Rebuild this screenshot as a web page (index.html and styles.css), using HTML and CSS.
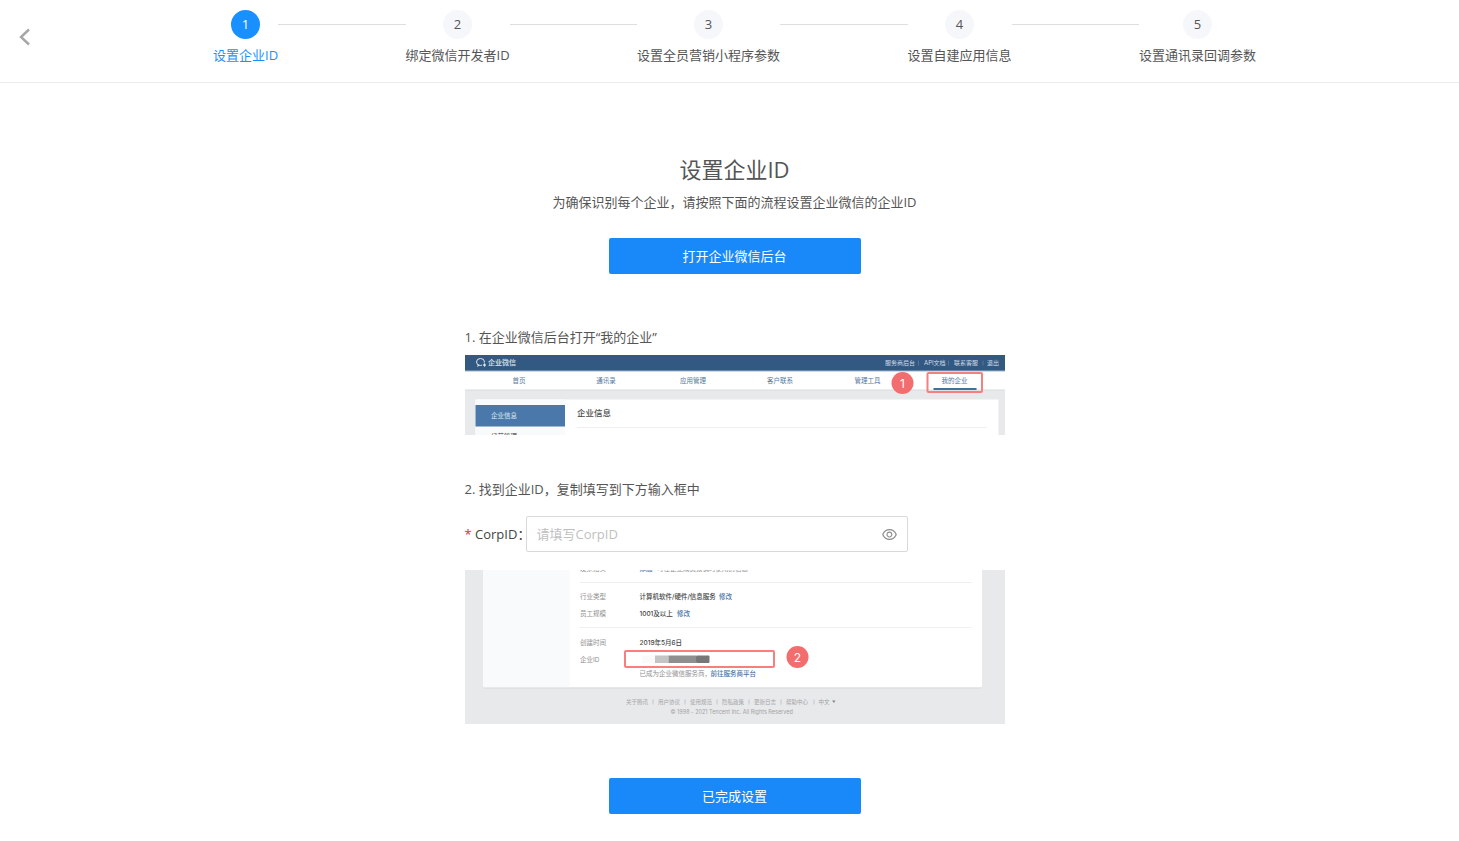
FILE: index.html
```html
<!DOCTYPE html>
<html lang="zh-CN">
<head>
	<meta charset="UTF-8">
	<meta name="viewport" content="width=device-width, initial-scale=1.0">
	<title>设置企业ID</title>
	<link rel="stylesheet" href="styles.css">
</head>
<body>
	<header class="header">
		<button class="back" type="button" aria-label="返回">
			<svg width="12" height="18" viewBox="0 0 12 18"><path d="M10 1.5L2 9l8 7.5" fill="none" stroke="#a6a6a6" stroke-width="2.4"/></svg>
		</button>
		<ol class="steps">
			<li class="step active"><span class="num">1</span><span class="name">设置企业ID</span></li>
			<li class="line"></li>
			<li class="step"><span class="num">2</span><span class="name">绑定微信开发者ID</span></li>
			<li class="line"></li>
			<li class="step"><span class="num">3</span><span class="name">设置全员营销小程序参数</span></li>
			<li class="line"></li>
			<li class="step"><span class="num">4</span><span class="name">设置自建应用信息</span></li>
			<li class="line"></li>
			<li class="step"><span class="num">5</span><span class="name">设置通讯录回调参数</span></li>
		</ol>
	</header>

	<main class="main">
		<h1>设置企业ID</h1>
		<p class="desc">为确保识别每个企业，请按照下面的流程设置企业微信的企业ID</p>
		<button class="btn" type="button">打开企业微信后台</button>

		<form class="guide" id="guide">
			<p class="tip">1. 在企业微信后台打开“我的企业”</p>
			<svg class="shot" viewBox="0 0 1080 160">
				<rect width="1080" height="160" fill="#e8e9eb"/>
				<!-- top bar -->
				<rect width="1080" height="32" fill="#325982"/>
				<ellipse cx="31" cy="14" rx="8" ry="7" fill="none" stroke="#dfe8f1" stroke-width="2"/>
				<path d="M26 19l-2 5 5-3" fill="#dfe8f1"/>
				<circle cx="39" cy="20" r="5" fill="#325982"/>
				<path d="M39 16l3 4-3 4-3-4z" fill="#dfe8f1"/>
				<text class="t14 medium" x="46" y="20" fill="#dfe8f1">企业微信</text>
				<g class="t12" fill="#d3deea">
					<text x="840" y="20">服务商后台</text>
					<text x="918" y="20">API文档</text>
					<text x="978" y="20">联系客服</text>
					<text x="1044" y="20">退出</text>
				</g>
				<path d="M907 11v10M967 11v10M1036 11v10" stroke="#7892ae"/>
				<!-- nav -->
				<rect y="32" width="1080" height="38" fill="#fff"/>
				<path d="M0 32h1080" stroke="#9fb6cd" stroke-width="2"/>
				<path d="M0 70h1080" stroke="#d9dbde" stroke-width="2"/>
				<g class="t13 mid" fill="#55789f">
					<text x="108" y="55">首页</text>
					<text x="282" y="55">通讯录</text>
					<text x="456" y="55">应用管理</text>
					<text x="630" y="55">客户联系</text>
					<text x="805" y="55">管理工具</text>
					<text x="979" y="55">我的企业</text>
				</g>
				<rect x="937" y="66" width="86" height="4" fill="#456f9b"/>
				<rect x="925" y="36" width="109" height="38" rx="2" fill="none" stroke="#f87f7f" stroke-width="4"/>
				<circle cx="875" cy="56" r="22" fill="#f26d6d"/>
				<text class="t24 mid" x="875" y="65" fill="#fff">1</text>
				<!-- panel -->
				<rect x="21" y="89" width="1046" height="71" fill="#fff"/>
				<rect x="21" y="89" width="179" height="71" fill="#f9fafb"/>
				<rect x="21" y="100" width="179" height="43" fill="#4a78ab"/>
				<text class="t13" x="52" y="126" fill="#dfe8f1">企业信息</text>
				<text class="t13" x="52" y="168" fill="#444">经营管理</text>
				<text class="t17 medium" x="224" y="122" fill="#4a4a4a">企业信息</text>
				<path d="M224 145h820" stroke="#efefef" stroke-width="2"/>
			</svg>

			<p class="tip">2. 找到企业ID，复制填写到下方输入框中</p>
			<div class="field">
				<label for="corp-id"><span class="star">*</span> CorpID：</label>
				<div class="input-box">
					<input id="corp-id" type="text" placeholder="请填写CorpID">
					<button class="eye" type="button" aria-label="显示">
						<svg width="15" height="15" viewBox="64 64 896 896" fill="#8c8c8c"><path d="M942.2 486.2C847.4 286.5 704.1 186 512 186c-192.2 0-335.4 100.5-430.2 300.3a60.3 60.3 0 000 51.5C176.6 737.5 319.9 838 512 838c192.2 0 335.4-100.5 430.2-300.3 7.7-16.2 7.7-35 0-51.5zM512 766c-161.3 0-279.4-81.8-362.7-254C232.6 339.8 350.7 258 512 258c161.3 0 279.4 81.8 362.7 254C791.5 684.2 673.4 766 512 766zm-4-430c-97.2 0-176 78.8-176 176s78.8 176 176 176 176-78.8 176-176-78.8-176-176-176zm0 288c-61.9 0-112-50.1-112-112s50.1-112 112-112 112 50.1 112 112-50.1 112-112 112z"/></svg>
					</button>
				</div>
			</div>
			<svg class="shot" viewBox="0 0 1080 308">
				<rect width="1080" height="308" fill="#e8e9eb"/>
				<path d="M36 0h998v231a4 4 0 0 1-4 4H40a4 4 0 0 1-4-4z" fill="#fff"/>
				<path d="M36 0h173v235H40a4 4 0 0 1-4-4z" fill="#f8fafb"/>
				<path d="M38 236h994" stroke="#d8dadc" stroke-width="2"/>
				<path d="M230 25h783M230 115h783" stroke="#efefef" stroke-width="2"/>
				<g class="t13" fill="#8f8f8f">
					<text x="230" y="2">发票抬头</text>
					<text x="384" y="2">可在企业成员报销时使用的信息</text>
					<text x="230" y="58">行业类型</text>
					<text x="230" y="92">员工规模</text>
					<text x="230" y="150">创建时间</text>
					<text x="230" y="183">企业ID</text>
					<text x="349" y="212">已成为企业微信服务商，</text>
				</g>
				<g class="t13 medium" fill="#444">
					<text x="349" y="58">计算机软件/硬件/信息服务</text>
					<text x="349" y="92">1001及以上</text>
					<text x="349" y="150">2019年5月6日</text>
				</g>
				<g class="t13 medium" fill="#4a74a8">
					<text x="349" y="2">添加</text>
					<text x="508" y="58">修改</text>
					<text x="424" y="92">修改</text>
					<text x="491" y="212">前往服务商平台</text>
				</g>
				<!-- masked id -->
				<rect x="354" y="171" width="26" height="15" fill="#fafafa"/>
				<rect x="380" y="171" width="27" height="15" fill="#c4c4c4"/>
				<rect x="407" y="171" width="55" height="15" fill="#8f8f8f"/>
				<rect x="462" y="171" width="27" height="15" rx="2" fill="#777"/>
				<rect x="320" y="162" width="298" height="32" rx="2" fill="none" stroke="#f87f7f" stroke-width="4"/>
				<circle cx="665" cy="174" r="22" fill="#f26d6d"/>
				<text class="t24 mid" x="665" y="183" fill="#fff">2</text>
				<!-- footer -->
				<g class="t11" fill="#a3a3a3">
					<text x="322" y="268">关于腾讯</text>
					<text x="386" y="268">用户协议</text>
					<text x="450" y="268">使用规范</text>
					<text x="514" y="268">隐私政策</text>
					<text x="578" y="268">更新日志</text>
					<text x="642" y="268">帮助中心</text>
					<text x="707" y="268">中文</text>
					<text x="411" y="287">© 1998 - 2021 Tencent Inc. All Rights Reserved</text>
				</g>
				<path d="M376 259v10M440 259v10M504 259v10M568 259v10M632 259v10M698 259v10" stroke="#a3a3a3"/>
				<path d="M734 261h7l-3 5z" fill="#888"/>
			</svg>
		</form>

		<button class="btn" type="submit" form="guide">已完成设置</button>
	</main>
</body>
</html>
```
FILE: styles.css
```css
* {
	box-sizing: border-box;
}
body {
	margin: 0;
	background: #fff;
	color: #555;
	font: 13px/20px "Open Sans", "Noto Sans CJK SC", sans-serif;
}
button, input {
	font: inherit;
}
h1, p, ol {
	margin: 0;
	padding: 0;
}
button {
	padding: 0;
	border: none;
	background: none;
	cursor: pointer;
}

.header {
	display: grid;
	grid-template-columns: 213px 1fr 203px;
	padding: 10px 0 17px;
	border-bottom: 1px solid #ebebeb;
}
.back {
	display: flex;
	justify-self: start;
	align-self: center;
	padding: 0 0 2px 19px;
}
.steps {
	display: flex;
	list-style: none;
}
.step {
	display: flex;
	flex-direction: column;
	align-items: center;
	gap: 6px;
	white-space: nowrap;
}
.num {
	width: 29px;
	height: 29px;
	border-radius: 50%;
	background: #f5f7fa;
	line-height: 29px;
	text-align: center;
}
.line {
	flex: 1;
	height: 1px;
	margin-top: 14px;
	background: #dedede;
}
.active {
	color: #1890ff;
}
.active .num {
	background: #1890ff;
	color: #fff;
}

.main {
	display: flex;
	flex-direction: column;
	align-items: center;
	padding: 70px 0 27px 10px;
}
h1 {
	font-size: 22px;
	font-weight: 400;
	line-height: 32px;
}
.desc {
	margin: 7px 0 26px;
}
.btn {
	width: 252px;
	height: 36px;
	border-radius: 2px;
	background: #1989fa;
	color: #fff;
}

.guide {
	width: 100%;
	max-width: 540px;
	margin: 53px 0 54px;
}
.shot {
	display: block;
	width: 100%;
	margin: 8px 0 44px;
	font-family: Inter, "Noto Sans CJK SC", sans-serif;
}
.field {
	display: flex;
	align-items: center;
	margin: 17px 0 18px;
}
.field label {
	width: 61px;
	color: #444;
	white-space: nowrap;
}
.star {
	color: #f5222d;
}
.input-box {
	display: flex;
	align-items: center;
	width: 382px;
	height: 36px;
	padding: 0 10px;
	border: 1px solid #d9d9d9;
	border-radius: 2px;
}
.input-box input {
	flex: 1;
	min-width: 0;
	padding: 0;
	border: none;
	outline: none;
	color: #555;
}
.input-box input::placeholder {
	color: #bfbfbf;
}
.eye {
	display: flex;
}
.shot:last-child {
	margin: 0;
}

/* text inside the screenshots */
.t11 {
	font-size: 11px;
}
.t12 {
	font-size: 12px;
}
.t13 {
	font-size: 13px;
}
.t14 {
	font-size: 14px;
}
.t17 {
	font-size: 17px;
}
.t24 {
	font-size: 24px;
}
.mid {
	text-anchor: middle;
}
.medium {
	font-weight: 500;
}
```
